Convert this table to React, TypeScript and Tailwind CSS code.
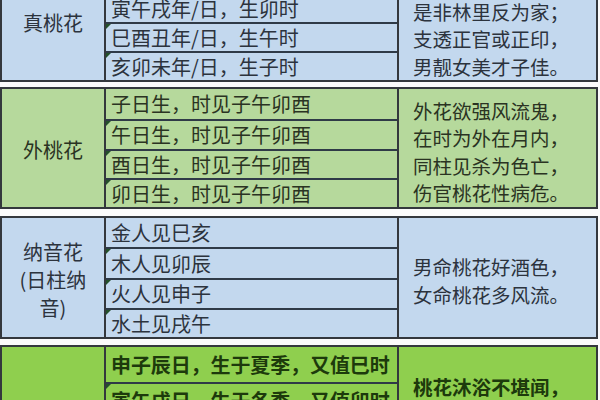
import React from "react";

type Section = {
  bg: string;
  text: string;
  gap: string;
  label: string[];
  labelPad: string;
  rows: { text: string; h: string }[];
  lines: string[];
  linePad: string;
};

const NB = "\u00a0";

const SECTIONS: Section[] = [
  {
    bg: "bg-[#c3d8ee]",
    text: "text-[#2c333d]",
    gap: "mt-0",
    label: ["真桃花"],
    labelPad: "pt-0",
    rows: [
      { text: NB, h: "h-[27px]" },
      { text: "寅午戌年/日，生卯时", h: "h-[27px]" },
      { text: "巳酉丑年/日，生午时", h: "h-[27px]" },
      { text: "亥卯未年/日，生子时", h: "h-[27px]" },
    ],
    lines: [NB, "是非林里反为家；", "支透正官或正印，", "男靓女美才子佳。"],
    linePad: "pt-[4px]",
  },
  {
    bg: "bg-[#b6d99c]",
    text: "text-[#2a3322]",
    gap: "mt-[5px]",
    label: ["外桃花"],
    labelPad: "pt-[4px]",
    rows: [
      { text: "子日生，时见子午卯酉", h: "h-[30px]" },
      { text: "午日生，时见子午卯酉", h: "h-[28px]" },
      { text: "酉日生，时见子午卯酉", h: "h-[27px]" },
      { text: "卯日生，时见子午卯酉", h: "h-[27px]" },
    ],
    lines: ["外花欲强风流鬼，", "在时为外在月内，", "同柱见杀为色亡，", "伤官桃花性病危。"],
    linePad: "pt-[7px]",
  },
  {
    bg: "bg-[#c3d8ee]",
    text: "text-[#2c333d]",
    gap: "mt-[7px]",
    label: ["纳音花", "(日柱纳", "音)"],
    labelPad: "pt-[5px]",
    rows: [
      { text: "金人见巳亥", h: "h-[29px]" },
      { text: "木人见卯辰", h: "h-[29px]" },
      { text: "火人见申子", h: "h-[28px]" },
      { text: "水土见戌午", h: "h-[27px]" },
    ],
    lines: ["男命桃花好酒色，", "女命桃花多风流。"],
    linePad: "pt-[6px]",
  },
  {
    bg: "bg-[#8fcf4e]",
    text: "text-[#1d3a0c] font-semibold",
    gap: "mt-[6px]",
    label: [NB],
    labelPad: "pt-0",
    rows: [
      { text: "申子辰日，生于夏季，又值巳时", h: "h-[35px]" },
      { text: "寅午戌日，生于冬季，又值卯时", h: "h-[34px]" },
      { text: NB, h: "h-[34px]" },
      { text: NB, h: "h-[34px]" },
    ],
    lines: ["桃花沐浴不堪闻，", NB, NB],
    linePad: "pb-[8px]",
  },
];

function Marker() {
  return (
    <span className="absolute left-0 top-0 w-0 h-0 border-t-[5px] border-t-[#24502a] border-r-[5px] border-r-transparent" />
  );
}

export default function App() {
  return (
    <div className="w-[600px] h-[400px] overflow-hidden bg-[#fbfbfb] font-['Noto_Sans_CJK_SC',sans-serif]">
      <div className="w-[598px] -mt-[36px] flex flex-col">
        {SECTIONS.map((s, i) => (
          <div
            key={i}
            className={`${s.gap} ${s.bg} ${s.text} flex border-2 border-[#34383d]`}
          >
            <div
              className={`w-[104px] shrink-0 border-r-2 border-[#34383d] flex flex-col items-center justify-center text-[20px] leading-[28px] ${s.labelPad}`}
            >
              {s.label.map((l, k) => (
                <span key={k}>{l}</span>
              ))}
            </div>
            <div className="w-[293px] shrink-0 border-r-2 border-[#34383d] flex flex-col">
              {s.rows.map((r, j) => (
                <div
                  key={j}
                  className={`relative ${r.h} box-content flex items-center pl-[5px] text-[20px] leading-[28px] whitespace-nowrap ${
                    j > 0 ? "border-t-2 border-[#2f3a47]" : ""
                  } ${i === 3 ? "text-[19px] tracking-[-0.1px]" : ""}`}
                >
                  {j > 0 && <Marker />}
                  {r.text}
                </div>
              ))}
            </div>
            <div
              className={`flex-1 flex flex-col justify-center pl-[14px] text-[19.5px] leading-[27.5px] whitespace-nowrap ${s.linePad}`}
            >
              {s.lines.map((l, k) => (
                <span key={k}>{l}</span>
              ))}
            </div>
          </div>
        ))}
      </div>
    </div>
  );
}
